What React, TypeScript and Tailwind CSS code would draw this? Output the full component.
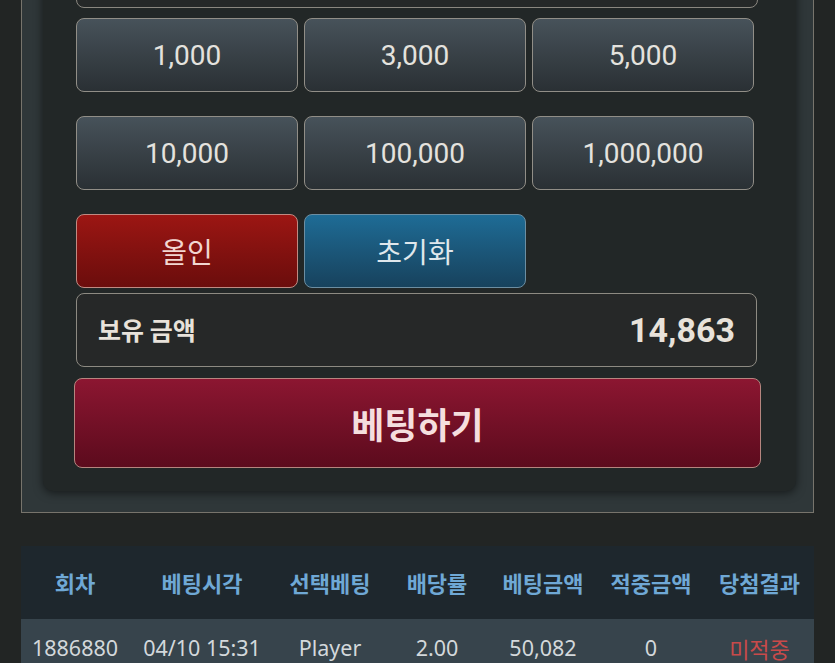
const amounts = ['1,000', '3,000', '5,000', '10,000', '100,000', '1,000,000'];

const columns = ['회차', '베팅시각', '선택베팅', '배당률', '베팅금액', '적중금액', '당첨결과'];

const rows = [
  { round: '1886880', time: '04/10 15:31', pick: 'Player', odds: '2.00', bet: '50,082', win: '0', result: '미적중' },
];

const cols = 'grid grid-cols-[108px_146px_110px_104px_108px_108px_109px]';

export default function App() {
  return (
    <div className="min-h-screen overflow-hidden bg-[#222524] font-['Noto_Sans_CJK_KR',sans-serif]">
      {/* Bet panel */}
      <div className="mx-[21px] -mt-[100px] border border-[#77746c] bg-[#2f3739] pl-[21px] pr-[17px] pt-[21px] pb-[21px]">
        <div className="rounded-[10px] bg-[#222727] pl-[33px] pr-[38px] pt-[36px] pb-[23px] shadow-[0_2px_10px_rgba(0,0,0,0.55)]">
          <div className="h-[50px] rounded-lg border border-[#8a8780] bg-[#252828]"></div>

          <div className="mt-[10px] grid w-[678px] grid-cols-3 gap-x-[6px] gap-y-[24px]">
            {amounts.map((a) => (
              <button
                key={a}
                className="h-[74px] rounded-lg border border-[#918e87] bg-gradient-to-b from-[#47525a] to-[#2a3034] pt-[2px] font-['Roboto',sans-serif] text-[28px] text-[#e4e2de]"
              >
                {a}
              </button>
            ))}
            <button className="h-[74px] rounded-lg border border-[#c08a82] bg-gradient-to-b from-[#9c1613] to-[#6b0d0c] text-[28px] text-[#f2d6d1]">
              올인
            </button>
            <button className="h-[74px] rounded-lg border border-[#6c8ea2] bg-gradient-to-b from-[#1e6c96] to-[#17425d] text-[28px] text-[#dfe7ec]">
              초기화
            </button>
          </div>

          <div className="mt-[5px] flex h-[74px] w-[681px] items-center justify-between rounded-lg border border-[#8d8a82] bg-[#262828] pl-[21px] pr-[21px]">
            <span className="text-[25px] font-bold text-[#e8e2da]">보유 금액</span>
            <span className="font-['Roboto',sans-serif] text-[34px] font-bold text-[#e8e2da]">14,863</span>
          </div>

          <button className="-ml-[2px] mt-[11px] flex h-[90px] w-[687px] items-center justify-center rounded-lg border border-[#b6857f] bg-gradient-to-b from-[#8c1631] to-[#5c0b1d] text-[36px] font-bold text-[#f5dede]">
            베팅하기
          </button>
        </div>
      </div>

      {/* Bet history */}
      <div className="mx-[21px] mt-[33px]">
        <div className={`${cols} h-[73px] items-center bg-[#1e272d] text-center text-[22px] font-bold text-[#6fa8d5]`}>
          {columns.map((c) => (
            <div key={c}>{c}</div>
          ))}
        </div>
        {rows.map((r) => (
          <div
            key={r.round}
            className={`${cols} h-[58px] items-center bg-[#37444c] text-center font-['Noto_Sans','Noto_Sans_CJK_KR',sans-serif] text-[21.5px] leading-none text-[#d3d8db]`}
          >
            <div>{r.round}</div>
            <div>{r.time}</div>
            <div>{r.pick}</div>
            <div>{r.odds}</div>
            <div>{r.bet}</div>
            <div>{r.win}</div>
            <div className="font-['Noto_Sans_CJK_KR',sans-serif] text-[22px] text-[#c84a4a]">{r.result}</div>
          </div>
        ))}
      </div>
    </div>
  );
}
